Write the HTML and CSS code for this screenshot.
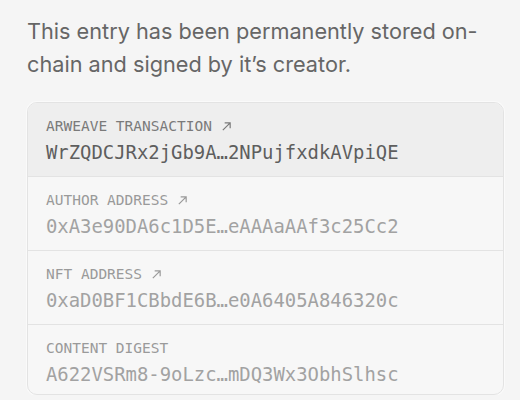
FILE: index.html
```html
<!DOCTYPE html>
<html>
<head>
<meta charset="utf-8">
<link rel="stylesheet" href="styles.css">
</head>
<body>
<div class="page">
  <p class="intro">This entry has been permanently stored on-chain and signed by it’s creator.</p>
  <div class="card">
    <div class="row row-active">
      <div class="label">ARWEAVE TRANSACTION <svg class="arrow" viewBox="0 0 12 12"><path d="M2 10 L10 2 M4 2 H10 V8" fill="none" stroke="currentColor" stroke-width="1.3"/></svg></div>
      <div class="value">WrZQDCJRx2jGb9A…2NPujfxdkAVpiQE</div>
    </div>
    <div class="row">
      <div class="label">AUTHOR ADDRESS <svg class="arrow" viewBox="0 0 12 12"><path d="M2 10 L10 2 M4 2 H10 V8" fill="none" stroke="currentColor" stroke-width="1.3"/></svg></div>
      <div class="value">0xA3e90DA6c1D5E…eAAAaAAf3c25Cc2</div>
    </div>
    <div class="row">
      <div class="label">NFT ADDRESS <svg class="arrow" viewBox="0 0 12 12"><path d="M2 10 L10 2 M4 2 H10 V8" fill="none" stroke="currentColor" stroke-width="1.3"/></svg></div>
      <div class="value">0xaD0BF1CBbdE6B…e0A6405A846320c</div>
    </div>
    <div class="row row-last">
      <div class="label">CONTENT DIGEST</div>
      <div class="value">A622VSRm8-9oLzc…mDQ3Wx3ObhSlhsc</div>
    </div>
  </div>
</div>
</body>
</html>
```
FILE: styles.css
```css
html, body {
  margin: 0;
  padding: 0;
  background: #f5f5f5;
}
.page {
  padding: 15px 16px 0 27px;
}
.intro {
  margin: 0 0 21px 0;
  font-family: Inter, "Noto Sans", sans-serif;
  font-size: 21.7px;
  line-height: 33px;
  color: #666;
  width: 462px;
}
.card {
  width: 475px;
  border: 1px solid #e3e3e3;
  border-radius: 10px;
  background: #f7f7f7;
  overflow: hidden;
  box-shadow: 0 0 0 1px #fafafa;
}
.row {
  padding: 13px 18px 0 18px;
  height: 60px;
  border-top: 1px solid #e3e3e3;
  font-family: "DejaVu Sans Mono", "Liberation Mono", monospace;
}
.row:first-child {
  border-top: none;
  height: 60px;
}
.row-last {
  height: 56px;
}
.row-active {
  background: #eeeeee;
}
.label {
  display: flex;
  align-items: center;
  gap: 9px;
  font-size: 14.5px;
  line-height: 20px;
  color: #9a9a9a;
}
.row-active .label {
  color: #7a7a7a;
}
.arrow {
  width: 11px;
  height: 11px;
}
.value {
  margin-top: 3px;
  font-size: 18.9px;
  line-height: 26px;
  color: #a2a2a2;
}
.row-active .value {
  color: #5e5e5e;
}
```
